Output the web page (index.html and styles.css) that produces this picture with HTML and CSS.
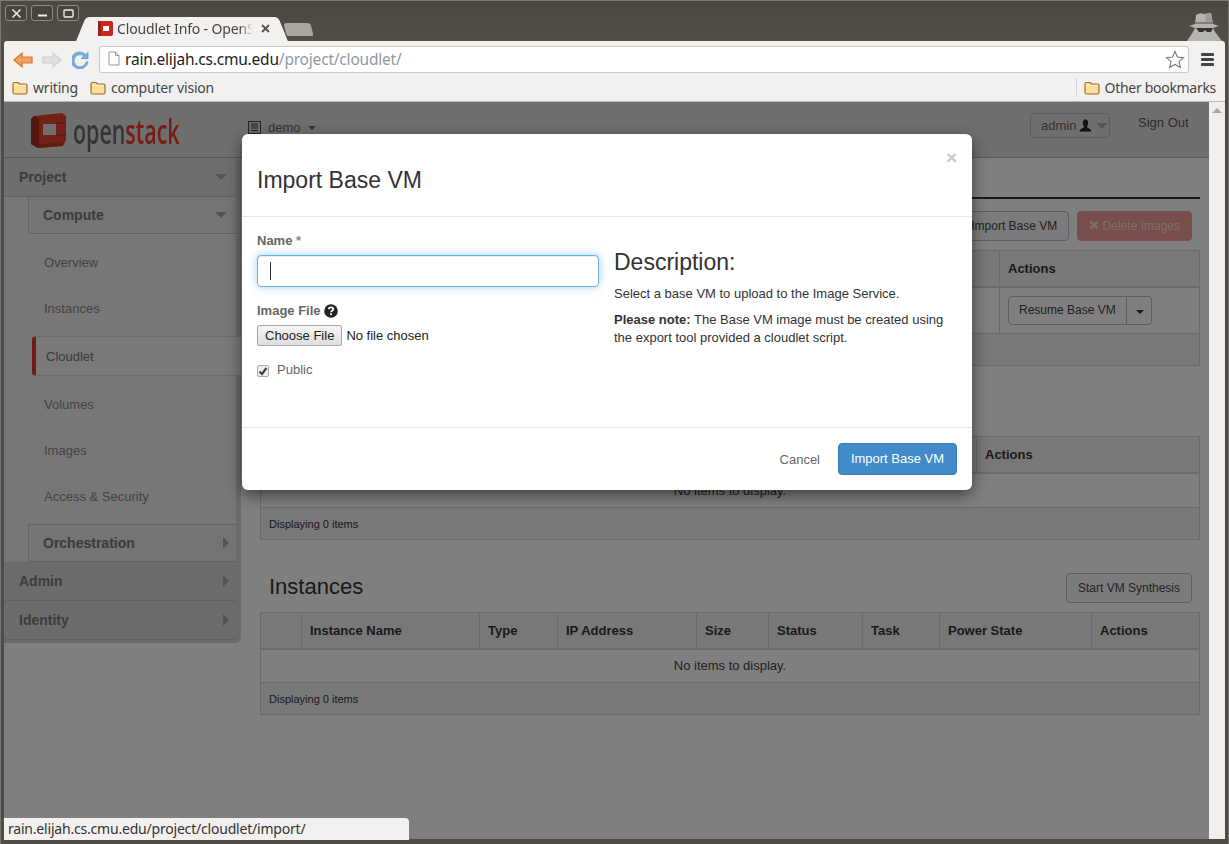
FILE: index.html
```
<!DOCTYPE html>
<html>
<head>
<title>Cloudlet Info - OpenStack Dashboard</title>
<meta charset="utf-8">
<link rel="stylesheet" href="styles.css">
</head>
<body>
<svg class="defs" width="0" height="0">
	<symbol id="folder" viewBox="0 0 16 14">
		<path d="M1 3 Q1 1.5 2.5 1.5 H6 L7.5 3 H13.5 Q15 3 15 4.5 V11.5 Q15 13 13.5 13 H2.5 Q1 13 1 11.5 Z" fill="#fbdf98" stroke="#9a6e30" stroke-width="1.2"/>
		<path d="M2 4.5 H14" stroke="#fff3d0" stroke-width="1"/>
	</symbol>
</svg>
<div class="window">
	<div class="titlebar">
		<div class="winbtns">
			<span class="winbtn"><svg width="11" height="11" viewBox="0 0 11 11"><path d="M1.5 1.5 L9.5 9.5 M9.5 1.5 L1.5 9.5" stroke="#eee" stroke-width="1.5"/></svg></span>
			<span class="winbtn"><svg width="11" height="11" viewBox="0 0 11 11"><path d="M1 7.5 H10" stroke="#eee" stroke-width="2"/></svg></span>
			<span class="winbtn"><svg width="11" height="11" viewBox="0 0 11 11"><rect x="1" y="2" width="9" height="7" rx="1" fill="none" stroke="#eee" stroke-width="1.4"/></svg></span>
		</div>
		<div class="tab">
			<svg class="favicon" width="15" height="15" viewBox="0 0 15 15"><rect width="15" height="15" rx="2" fill="#c6281e"/><path d="M0 0 H3 V15 H0 Z" fill="#9c1f17"/><rect x="5" y="5" width="6" height="5" fill="#fff"/></svg>
			<span class="tab-title">Cloudlet Info - OpenStack Dashboard</span>
			<svg class="tab-close" width="9" height="9" viewBox="0 0 9 9"><path d="M1 1 L8 8 M8 1 L1 8" stroke="#555" stroke-width="1.8"/></svg>
		</div>
		<div class="newtab"></div>
		<svg class="incognito" width="36" height="29" viewBox="0 0 36 29">
			<path d="M9 12 L10 3 Q14 0 18 2 L25 1 L27 12 L33 14 L27 16 L29 20 L36 29 H1 L7 20 L9 16 L3 14 Z" fill="#b4b3ae"/>
			<path d="M19 2 L25 1 L27 12 H20 Z" fill="#9d9c97"/>
			<path d="M9 10 L27 10 V12 H9 Z" fill="#7f7e79"/>
			<path d="M10 16 H27 L25 20 H21 L19 18 L17 20 H13 Z" fill="#33322e"/>
		</svg>
	</div>
	<div class="toolbar">
		<svg class="navicon back" width="20" height="18" viewBox="0 0 20 18"><path d="M1 9 L9 2 V6 H19 V12 H9 V16 Z" fill="#f0a060" stroke="#d9762c" stroke-width="1.2"/></svg>
		<svg class="navicon" width="20" height="18" viewBox="0 0 20 18"><path d="M19 9 L11 2 V6 H1 V12 H11 V16 Z" fill="#e2e1df" stroke="#d2d1cf" stroke-width="1.2"/></svg>
		<svg class="navicon" width="17" height="18" viewBox="0 0 18 18"><path d="M15 11 A6.5 6.5 0 1 1 12.5 4.5 L10 7.5 H17 V1 L14.6 3.2 A9 9 0 1 0 17 11 Z" fill="#7daee0" stroke="#5c93cf" stroke-width=".8"/></svg>
		<div class="omnibox">
			<svg class="page-icon" width="12" height="15" viewBox="0 0 12 15"><path d="M1 1 H7.5 L11 4.5 V14 H1 Z" fill="#fff" stroke="#999"/><path d="M7.5 1 V4.5 H11" fill="none" stroke="#999"/></svg>
			<span class="url"><span class="url-host">rain.elijah.cs.cmu.edu</span>/project/cloudlet/</span>
			<svg class="star" width="20" height="19" viewBox="0 0 20 19"><path d="M10 1.5 L12.4 7 L18.5 7.6 L14 11.6 L15.3 17.5 L10 14.5 L4.7 17.5 L6 11.6 L1.5 7.6 L7.6 7 Z" fill="#fff" stroke="#777" stroke-width="1.1"/></svg>
		</div>
		<div class="menu-icon"><span></span><span></span><span></span></div>
	</div>
	<div class="bookmarks">
		<span class="bookmark"><svg width="16" height="14"><use href="#folder"/></svg>writing</span>
		<span class="bookmark"><svg width="16" height="14"><use href="#folder"/></svg>computer vision</span>
		<span class="bookmark other"><svg width="16" height="14"><use href="#folder"/></svg>Other bookmarks</span>
	</div>
	<div class="page">
		<div class="content">
			<header class="topbar">
				<div class="brand">
					<svg width="37" height="36" viewBox="0 0 37 36">
						<path d="M4 3 L32 0 L36 3 V27 L33 33 L8 35 L1 31 V6 Z" fill="#e8412d"/>
						<path d="M1 6 L4 3 L9 6 V35 L8 35 L1 31 Z" fill="#a92f24"/>
						<path d="M9 31 L33 29 L33 33 L8 35 Z" fill="#c23829"/>
						<rect x="13" y="11" width="13" height="11" fill="#dfdfdf"/>
						<path d="M1 13 H9 M1 20 H9 M1 27 H9 M26 10 H36 M26 22 H36" stroke="#8f2a20" stroke-width="1"/>
					</svg>
					<span class="wordmark">open<span class="wordmark-red">stack</span></span>
				</div>
				<div class="project-pick">
					<svg width="13" height="13" viewBox="0 0 13 13"><rect x=".5" y=".5" width="12" height="12" fill="none" stroke="#444"/><path d="M3 3 H10 M3 5 H10 M3 7 H10 M3 9.500 H10" stroke="#444" stroke-width="1"/></svg>
					<span>demo</span><i class="caret"></i>
				</div>
				<div class="user-pick">admin <svg width="13" height="13" viewBox="0 0 13 13"><path d="M6.500 0.500 C9 0.500 9.500 3 9 5 C8.700 6.500 8 7.500 8 8 C8 9 12 9.500 12.500 12.500 H.5 C1 9.500 5 9 5 8 C5 7.500 4.300 6.500 4 5 C3.500 3 4 .5 6.500 .5 Z" fill="#222"/></svg><i class="caret big"></i></div>
				<a class="signout">Sign Out</a>
			</header>
			<div class="layout">
				<nav class="sidebar">
					<div class="nav-top">Project<i class="caret big dim"></i></div>
					<div class="nav-sub open">Compute<i class="caret big dim"></i></div>
					<a class="nav-item">Overview</a>
					<a class="nav-item">Instances</a>
					<a class="nav-item active">Cloudlet</a>
					<a class="nav-item">Volumes</a>
					<a class="nav-item">Images</a>
					<a class="nav-item">Access &amp; Security</a>
					<div class="nav-sub closed">Orchestration<i class="caret side"></i></div>
					<div class="nav-top closed">Admin<i class="caret side"></i></div>
					<div class="nav-top closed">Identity<i class="caret side"></i></div>
				</nav>
				<main class="main">
					<div class="tabline"></div>
					<div class="actions-row">
						<button class="btn">Import Base VM</button>
						<button class="btn btn-danger"><svg width="10" height="10" viewBox="0 0 10 10"><path d="M1.500 1.500 L8.500 8.500 M8.500 1.500 L1.500 8.500" stroke="#f7dcdc" stroke-width="2.600"/></svg> Delete Images</button>
					</div>
					<table class="grid">
						<colgroup><col><col class="c-act1"></colgroup>
						<thead><tr><th></th><th>Actions</th></tr></thead>
						<tbody><tr class="tall"><td></td><td><span class="btn-group"><button class="btn btn-sm">Resume Base VM</button><button class="btn btn-sm btn-split"><i class="caret black"></i></button></span></td></tr></tbody>
						<tfoot><tr><td colspan="2"></td></tr></tfoot>
					</table>
					<table class="grid second">
						<colgroup><col><col class="c-act2"></colgroup>
						<thead><tr><th></th><th>Actions</th></tr></thead>
						<tbody><tr><td colspan="2" class="empty">No items to display.</td></tr></tbody>
						<tfoot><tr><td colspan="2">Displaying 0 items</td></tr></tfoot>
					</table>
					<div class="section-head">
						<h2>Instances</h2>
						<button class="btn">Start VM Synthesis</button>
					</div>
					<table class="grid">
						<colgroup><col class="i1"><col class="i2"><col class="i3"><col class="i4"><col class="i5"><col class="i6"><col class="i7"><col class="i8"><col></colgroup>
						<thead><tr><th></th><th>Instance Name</th><th>Type</th><th>IP Address</th><th>Size</th><th>Status</th><th>Task</th><th>Power State</th><th>Actions</th></tr></thead>
						<tbody><tr><td colspan="9" class="empty">No items to display.</td></tr></tbody>
						<tfoot><tr><td colspan="9">Displaying 0 items</td></tr></tfoot>
					</table>
				</main>
			</div>
			<div class="backdrop"></div>
			<div class="modal">
				<div class="modal-header">
					<span class="modal-close">&times;</span>
					<h3>Import Base VM</h3>
				</div>
				<div class="modal-body">
					<div class="modal-left">
						<label class="field-label">Name <span class="req">*</span></label>
						<div class="name-wrap"><input class="name-input" type="text"><span class="text-caret"></span></div>
						<label class="field-label file-label">Image File <svg width="14" height="14" viewBox="0 0 14 14"><circle cx="7" cy="7" r="6.800" fill="#222"/><path d="M4.800 5.300 C4.800 2.800 9.300 2.800 9.300 5.300 C9.300 6.800 7 6.800 7 8.300" fill="none" stroke="#fff" stroke-width="1.700"/><rect x="6.100" y="9.300" width="1.800" height="1.800" fill="#fff"/></svg></label>
						<input class="file-input" type="file">
						<label class="check-row"><span class="check"><svg width="10" height="10" viewBox="0 0 10 10"><path d="M1.500 5.500 L4 8 L8.500 2" fill="none" stroke="#444" stroke-width="2.200"/></svg></span>Public</label>
					</div>
					<div class="modal-right">
						<h3>Description:</h3>
						<p>Select a base VM to upload to the Image Service.</p>
						<p><strong>Please note:</strong> The Base VM image must be created using the export tool provided a cloudlet script.</p>
					</div>
				</div>
				<div class="modal-footer">
					<a class="cancel">Cancel</a>
					<button class="btn-primary">Import Base VM</button>
				</div>
			</div>
		</div>
		<div class="scrollbar"><i class="scroll-up"></i></div>
		<div class="status">rain.elijah.cs.cmu.edu/project/cloudlet/import/</div>
	</div>
</div>
</body>
</html>
```

FILE: styles.css
```
* {box-sizing: border-box;}
html, body {margin: 0; height: 100%; overflow: hidden;}
body {font-family: "Liberation Sans", Arial, sans-serif; font-size: 13px; color: #333; background: #3c3b37;}
.defs {position: absolute;}

/* browser chrome */
.window {
	display: flex;
	flex-direction: column;
	height: 844px;
	padding: 0 4px 5px;
	background: #4f4c45;
	border-top: 1px solid #7d7b75;
	box-shadow: inset 1px 0 0 #77756f, inset -1px 0 0 #77756f;
}
.titlebar {display: flex; align-items: flex-start; height: 40px; background: linear-gradient(#4a4842, #524f48); margin: 0 -3px; padding: 0 3px; position: relative;}
.winbtns {display: flex; gap: 4px; margin: 4px 0 0 1px;}
.winbtn {display: flex; align-items: center; justify-content: center; width: 22px; height: 16px; border: 1px solid #8b8982; border-radius: 3px; background: #46443e;}
.tab {
	display: flex;
	align-items: center;
	width: 188px;
	height: 24px;
	margin: 16px 0 0 9px;
	padding: 0 6px 2px 10px;
	background: #f2f1f0;
	border-radius: 5px 5px 0 0;
	position: relative;
	font-family: "Noto Sans", sans-serif;
	font-size: 14px;
	letter-spacing: -.15px;
	color: #444;
}
.tab:before, .tab:after {content: ""; position: absolute; bottom: 0; width: 12px; height: 24px; background: #f2f1f0;}
.tab:before {left: -7px; transform: skewX(-22deg); border-radius: 4px 0 0 0;}
.tab:after {right: -7px; transform: skewX(22deg); border-radius: 0 4px 0 0;}
.favicon {flex: none; margin-right: 4px; position: relative; z-index: 1;}
.tab-title {flex: 1; overflow: hidden; white-space: nowrap; position: relative; z-index: 1; -webkit-mask-image: linear-gradient(90deg, #000 90%, transparent);}
.tab-close {flex: none; margin-left: 8px; position: relative; z-index: 1;}
.newtab {width: 27px; height: 13px; margin: 22px 0 0 9px; background: #a9a7a1; border-radius: 3px 3px 2px 2px; transform: skewX(14deg);}
.incognito {position: absolute; right: 6px; top: 11px;}
.toolbar {display: flex; align-items: center; height: 35px; padding: 2px 0 0 9px; background: #f2f1f0; border-radius: 3px 3px 0 0;}
.navicon {flex: none; margin-right: 10px;}
.navicon.back {margin-right: 9px;}
.omnibox {display: flex; align-items: center; flex: 1; height: 27px; background: #fff; border: 1px solid #c8c7c5; border-radius: 3px; padding: 0 3px 2px 8px;}
.page-icon {flex: none; margin-right: 5px;}
.url {flex: 1; font-family: "Noto Sans", sans-serif; font-size: 15.5px; letter-spacing: -.2px; color: #8f9aa5; white-space: nowrap;}
.url-host {color: #222;}
.star {margin-top: 2px;}
.menu-icon {display: flex; flex-direction: column; gap: 2px; width: 13px; margin: 0 11px 0 12px;}
.menu-icon span {height: 3px; background: #444; border-radius: 1px;}
.bookmarks {display: flex; align-items: center; height: 26px; padding: 0 9px 2px 8px; background: #f2f1f0; border-bottom: 1px solid #b9b8b6; font-family: "Noto Sans", sans-serif; font-size: 14px; letter-spacing: -.2px; color: #444;}
.bookmark {display: flex; align-items: center; gap: 5px; margin-right: 12px; white-space: nowrap;}
.bookmark.other {margin: 0 0 0 auto; padding-left: 7px; border-left: 1px solid #cfd6de; letter-spacing: -.3px;}

/* page */
.page {display: flex; flex: 1; min-height: 0; position: relative;}
.content {flex: 1; position: relative; overflow: hidden; background: #fff;}
.scrollbar {flex: none; width: 16px; background: #f0efee; position: relative; display: flex; justify-content: center; padding-top: 6px;}
.scroll-up {width: 0; height: 0; border: 5px solid transparent; border-top: 0; border-bottom: 5px solid #a8a8a8;}
.status {position: absolute; left: 0; bottom: -1px; width: 405px; height: 22px; padding: 0 4px; line-height: 22px; background: #f2f1f0; border-radius: 0 4px 0 0; font-family: "Noto Sans", sans-serif; font-size: 14px; letter-spacing: -.2px; color: #333; z-index: 5;}

.topbar {display: flex; height: 56px; padding: 11px 19px 0 26px; background: #dfdfdf; border-bottom: 1px solid #b0b0b0; align-items: flex-start;}
.brand {display: flex; align-items: center; width: 218px; height: 36px;}
.wordmark {font-family: "Open Sans", sans-serif; font-size: 34px; font-weight: 600; line-height: 36px; color: #6a6a6a; display: inline-block; transform: scaleX(.63); transform-origin: left center; margin-left: 6px; white-space: nowrap;}
.wordmark-red {color: #e8392a;}
.project-pick {display: flex; align-items: center; gap: 7px; margin-top: 7px; width: 782px; color: #666;}
.caret {display: inline-block; width: 0; height: 0; border-style: solid; border-color: #666 transparent transparent; border-width: 4px 4px 0;}
.caret.big {border-width: 6px 6px 0;}
.caret.side {border-width: 6px 0 6px 6px; border-color: transparent transparent transparent #a8a8a8; margin-right: -2px;}
.caret.dim {border-top-color: #a8a8a8;}
.caret.black {border-top-color: #333;}
.user-pick {display: flex; align-items: center; gap: 3px; width: 80px; height: 25px; padding-left: 10px; border: 1px solid #bbb; border-radius: 4px; color: #666;}
.user-pick .caret {margin-left: 1px; border-top-color: #aaa;}
.signout {margin: 2px 0 0 28px; color: #555; white-space: nowrap;}

.layout {display: flex; align-items: flex-start;}
.sidebar {flex: none; width: 237px; height: 485px; background: #efefef; border-right: 5px solid #d7d7d7; border-bottom: 4px solid #d7d7d7; border-radius: 0 0 5px 0;}
.nav-top {display: flex; align-items: center; justify-content: space-between; height: 39px; padding: 0 9px 0 15px; background: #dcdcdc; border-bottom: 1px solid #c4c4c4; font-size: 14px; font-weight: bold; color: #777;}
.nav-sub {display: flex; align-items: center; justify-content: space-between; height: 38px; margin-left: 24px; padding: 0 9px 0 14px; background: #e8e8e8; border: 1px solid #c4c4c4; border-right: 0; font-size: 14px; font-weight: bold; color: #777;}
.nav-sub.open {margin-top: -1px; margin-bottom: 5px;}
.nav-sub.closed {margin-top: 5px;}
.nav-top.closed {background: #d8d8d8;}
.nav-item {display: flex; align-items: center; height: 46px; padding-left: 40px; color: #888;}
.nav-item.active {height: 40px; margin: 5px -5px 5px 28px; padding-left: 10px; background: #f3f3f3; border: 1px solid #d5d5d5; border-left: 4px solid #e8352a; border-right: 0; border-radius: 4px 0 0 4px; color: #777;}

.main {flex: 1; padding: 39px 9px 0 19px;}
.tabline {height: 2px; background: #333;}
.actions-row {display: flex; justify-content: flex-end; gap: 8px; padding: 12px 8px 9px 0;}
.btn {height: 30px; padding: 0 11px; font: 12px "Liberation Sans", Arial, sans-serif; color: #444; background: #f6f6f6; border: 1px solid #bbb; border-radius: 4px; white-space: nowrap;}
.btn-danger {background: #f09a97; border-color: #f09a97; color: #f7dcdc;}
.btn-sm {height: 29px; padding: 0 10px; background: #fff;}
.btn-group {display: inline-flex; vertical-align: middle;}
.btn-group .btn:first-child {border-radius: 4px 0 0 4px;}
.btn-split {border-left: 0; border-radius: 0 4px 4px 0; padding: 0 9px; width: 25px;}
.grid {width: 100%; table-layout: fixed; border-collapse: collapse; border: 1px solid #d4d4d4;}
.grid th {height: 36px; padding: 0 8px; background: #f1f1f1; border: 1px solid #d4d4d4; border-bottom-width: 2px; font-size: 13px; text-align: left; color: #333;}
.grid td {height: 35px; padding: 0 8px; border: 1px solid #d4d4d4; font-size: 13px;}
.grid .tall td {height: 47px;}
.grid tfoot td {height: 32px; background: #f1f1f1; font-size: 11px; color: #333;}
.grid .empty {height: 34px; text-align: center; color: #444;}
.grid.second .empty {height: 35px;}
.c-act1 {width: 200px;}
.c-act2 {width: 223px;}
.second {margin-top: 70px;}
.section-head {display: flex; align-items: flex-start; justify-content: space-between; margin-top: 33px; height: 30px; padding: 0 8px 0 9px; margin-bottom: 9px;}
.section-head h2 {margin: 0; padding-top: 1px; font-size: 22px; line-height: 26px; font-weight: normal; color: #333;}
.i1 {width: 41px;}
.i2 {width: 178px;}
.i3 {width: 78px;}
.i4 {width: 139px;}
.i5 {width: 72px;}
.i6 {width: 94px;}
.i7 {width: 77px;}
.i8 {width: 152px;}

/* modal */
.backdrop {position: absolute; inset: 0; background: rgba(0, 0, 0, .5);}
.modal {position: absolute; left: 238px; top: 32px; width: 730px; height: 356px; display: flex; flex-direction: column; background: #fff; border-radius: 6px; box-shadow: 0 5px 15px rgba(0, 0, 0, .5);}
.modal-header {height: 83px; padding: 31px 15px 0; border-bottom: 1px solid #e5e5e5; position: relative;}
.modal-header h3 {margin: 0; font-size: 23px; font-weight: normal; line-height: 30px; color: #333;}
.modal-close {position: absolute; right: 15px; top: 14px; font-size: 19px; line-height: 20px; font-weight: bold; color: #c9c9c9;}
.modal-body {display: flex; flex: 1; padding: 16px 15px 0;}
.modal-left {width: 342px; flex: none;}
.field-label {display: block; font-weight: bold; color: #666; line-height: 15px;}
.req {color: #888;}
.name-wrap {position: relative; margin-top: 7px;}
.name-input {display: block; width: 100%; height: 32px; background: #fff; border: 1px solid #66afe9; border-radius: 4px; outline: 0; box-shadow: inset 0 1px 1px rgba(0, 0, 0, .075), 0 0 8px rgba(102, 175, 233, .6);}
.text-caret {position: absolute; left: 13px; top: 7px; width: 1px; height: 18px; background: #333;}
.file-label {display: flex; align-items: center; gap: 3px; margin-top: 16px;}
.file-input {display: block; margin-top: 7px; font: 13px "Liberation Sans", Arial, sans-serif; color: #222;}
.file-input::file-selector-button {height: 21px; padding: 0 7px; margin-right: 4px; font: 13px "Liberation Sans", Arial, sans-serif; color: #222; background: linear-gradient(#f6f6f6, #dedede); border: 1px solid #a6a6a6; border-radius: 2px;}
.check-row {display: flex; align-items: center; gap: 8px; margin-top: 16px; color: #666;}
.check {display: flex; align-items: center; justify-content: center; width: 12px; height: 12px; background: #eee; border: 1px solid #aaa; border-radius: 2px; margin-top: 3px;}
.modal-right {padding-left: 15px; flex: 1;}
.modal-right h3 {margin: 16px 0 10px; font-size: 23px; font-weight: normal; line-height: 26px; color: #333;}
.modal-right p {margin: 0 0 8px; line-height: 18px; color: #333;}
.modal-footer {display: flex; align-items: center; justify-content: flex-end; gap: 18px; height: 63px; padding: 0 15px; border-top: 1px solid #e5e5e5;}
.cancel {color: #666;}
.btn-primary {width: 119px; height: 32px; padding: 0 0 2px; font: 13px "Liberation Sans", Arial, sans-serif; color: #fff; background: #428bca; border: 1px solid #357ebd; border-radius: 4px;}
```
